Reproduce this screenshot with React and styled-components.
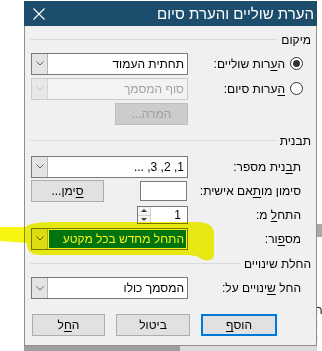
import React from 'react';
import styled, { createGlobalStyle } from 'styled-components';

const GlobalStyle = createGlobalStyle`
	html, body {
		margin: 0;
		padding: 0;
		background: #ffffff;
	}
	body {
		font-family: "Liberation Sans", Arial, "DejaVu Sans", sans-serif;
		font-size: 12px;
		color: #000000;
	}
`;

const Chevron = ({ color = '#606060' }) => (
	<svg width="8" height="5" viewBox="0 0 8 5">
		<path d="M0.5 0.5L4 4L7.5 0.5" fill="none" stroke={color} strokeWidth="1" />
	</svg>
);

const CloseIcon = () => (
	<svg width="12" height="12" viewBox="0 0 12 12">
		<path d="M0.5 0.5L11.5 11.5M11.5 0.5L0.5 11.5" stroke="#ffffff" strokeWidth="1.1" />
	</svg>
);

const Combo = ({ value, disabled, selected }) => (
	<ComboBox $disabled={disabled}>
		<ComboField $disabled={disabled} $selected={selected}>
			<span>{value}</span>
		</ComboField>
		<DropButton $disabled={disabled}>
			<Chevron color={disabled ? '#c4c4c4' : '#606060'} />
		</DropButton>
	</ComboBox>
);

const Section = ({ title, top }) => (
	<SectionHeader $top={top}>
		<span>{title}</span>
		<SectionLine />
	</SectionHeader>
);

const App = () => (
	<>
		<GlobalStyle />
		<Page>
			<Main>
				<Gutter />
				<Dialog dir="rtl">
					<TitleBar>
						<Title>הערת שוליים והערת סיום</Title>
						<Close>
							<CloseIcon />
						</Close>
					</TitleBar>
					<Body>
						<Section title="מיקום" />
						<Row $h={25} $top={4}>
							<Label $radio>
								<Radio $checked />
								<span>
									ה<K>ע</K>רות שוליים:
								</span>
							</Label>
							<Combo value="תחתית העמוד" />
						</Row>
						<Row $h={25}>
							<Label $radio>
								<Radio />
								<span>
									<K>ה</K>ערות סיום:
								</span>
							</Label>
							<Combo value="סוף המסמך" disabled />
						</Row>
						<Row $h={22} $top={2}>
							<span />
							<Controls>
								<Button $disabled>המרה...</Button>
							</Controls>
						</Row>

						<Section title="תבנית" top={8} />
						<Row $h={25} $top={6}>
							<Label>
								<span>
									ת<K>ב</K>נית מספר:
								</span>
							</Label>
							<Combo value="1, 2, 3, ..." />
						</Row>
						<Row $h={24}>
							<Label>
								<span>
									סימון מו<K>ת</K>אם אישית:
								</span>
							</Label>
							<Controls>
								<TextBox />
								<Button>
									<K>ס</K>ימן...
								</Button>
							</Controls>
						</Row>
						<Row $h={24}>
							<Label>
								<span>
									התח<K>ל</K> מ:
								</span>
							</Label>
							<Controls>
								<Spinner>
									<SpinValue>1</SpinValue>
									<SpinArrows>
										<SpinHalf>
											<Arrow $up />
										</SpinHalf>
										<SpinHalf>
											<Arrow />
										</SpinHalf>
									</SpinArrows>
								</Spinner>
							</Controls>
						</Row>
						<Row $h={23}>
							<Label>
								<span>
									מס<K>פ</K>ור:
								</span>
							</Label>
							<Combo value="התחל מחדש בכל מקטע" selected />
						</Row>

						<Section title="החלת שינויים" top={6} />
						<Row $h={24} $top={5}>
							<Label>
								<span>
									החל <K>ש</K>ינויים על:
								</span>
							</Label>
							<Combo value="המסמך כולו" />
						</Row>

						<Footer>
							<Button $default $w={76}>
								הוס<K>ף</K>
							</Button>
							<Button $w={74}>ביטול</Button>
							<Button $w={73}>
								ה<K>ח</K>ל
							</Button>
						</Footer>
					</Body>
				</Dialog>
				<RightStrip>
					<ScrollThumb />
					<Fragments>
						<span>ה</span>
						<span>ו</span>
						<span>ו</span>
					</Fragments>
				</RightStrip>
			</Main>
			<BottomBar>
				<Gutter />
				<BarDark />
				<BarLight />
			</BottomBar>
			<Marker viewBox="0 0 322 351" width="322" height="351">
				<path
					d="M0 227 L26 227 C28 224 36 222 56 222 L196 222 C208 222 214 226 214 234 L214 255 C214 261 205 262 200 258 C196 255 190 255 180 255 L40 255 C30 255 27 250 27 243 L0 241 Z"
					fill="#f6f612"
				/>
			</Marker>
		</Page>
	</>
);

const Page = styled.div`
	position: relative;
	width: 322px;
	height: 351px;
	overflow: hidden;
	display: flex;
	flex-direction: column;
`;

const Main = styled.div`
	display: flex;
	padding-top: 1px;
`;

const Gutter = styled.div`
	width: 24px;
	flex-shrink: 0;
`;

const Dialog = styled.div`
	width: 293px;
	height: 345px;
	flex-shrink: 0;
	box-sizing: border-box;
	background: #f0f0f0;
	border: 1px solid #8f8f8f;
	border-top: none;
	display: flex;
	flex-direction: column;
`;

const TitleBar = styled.div`
	height: 25px;
	margin: 0 -1px;
	background: #1c4d6c;
	display: flex;
	align-items: center;
	justify-content: space-between;
	padding: 0 3px 0 9px;
`;

const Title = styled.div`
	color: #ffffff;
	font-size: 15px;
`;

const Close = styled.div`
	display: flex;
	align-items: center;
`;

const Body = styled.div`
	padding: 6px 5px 0 6px;
	display: flex;
	flex-direction: column;
`;

const SectionHeader = styled.div`
	display: flex;
	align-items: center;
	gap: 4px;
	height: 15px;
	margin-top: ${props => props.$top || 0}px;
	margin-left: -1px;
`;

const SectionLine = styled.div`
	flex: 1;
	height: 1px;
	background: #dadada;
`;

const Row = styled.div`
	display: grid;
	grid-template-columns: 1fr 157px;
	align-items: center;
	height: ${props => props.$h}px;
	margin-top: ${props => props.$top || 0}px;
`;

const Label = styled.div`
	display: flex;
	align-items: center;
	gap: 5px;
	padding-right: ${props => (props.$radio ? 8 : 10)}px;
	white-space: nowrap;
`;

const K = styled.span`
	text-decoration: underline;
	text-underline-offset: 2px;
`;

const Radio = styled.span`
	position: relative;
	width: 13px;
	height: 13px;
	box-sizing: border-box;
	border: 1px solid #333333;
	border-radius: 50%;
	background: #ffffff;
	flex-shrink: 0;
	&::after {
		content: '';
		display: ${props => (props.$checked ? 'block' : 'none')};
		position: absolute;
		left: 2px;
		top: 2px;
		width: 7px;
		height: 7px;
		border-radius: 50%;
		background: #333333;
	}
`;

const ComboBox = styled.div`
	display: flex;
	height: 22px;
	box-sizing: border-box;
	border: 1px solid ${props => (props.$disabled ? '#cccccc' : '#7a7a7a')};
	background: ${props => (props.$disabled ? '#f3f3f3' : '#ffffff')};
`;

const ComboField = styled.div`
	flex: 1;
	display: flex;
	align-items: center;
	padding: ${props => (props.$selected ? '1px' : '0 3px 0 0')};
	color: ${props => (props.$disabled ? '#a3a3a3' : '#000000')};
	span {
		flex: 1;
		height: 100%;
		display: flex;
		align-items: center;
		padding-right: ${props => (props.$selected ? 2 : 0)}px;
		background: ${props => (props.$selected ? '#0078d7' : 'transparent')};
		color: ${props => (props.$selected ? '#ffffff' : 'inherit')};
	}
`;

const DropButton = styled.div`
	width: 15px;
	display: flex;
	align-items: center;
	justify-content: center;
	background: ${props => (props.$disabled ? '#e8e8e8' : '#e4e4e4')};
	border-right: 1px solid ${props => (props.$disabled ? '#d6d6d6' : '#b4b4b4')};
`;

const Controls = styled.div`
	display: flex;
	align-items: center;
	justify-content: space-between;
`;

const Button = styled.div`
	width: ${props => props.$w || 73}px;
	height: 22px;
	box-sizing: border-box;
	display: flex;
	align-items: center;
	justify-content: center;
	background: ${props => (props.$disabled ? '#cccccc' : '#e1e1e1')};
	border: ${props =>
		props.$default ? '2px solid #0078d7' : `1px solid ${props.$disabled ? '#bfbfbf' : '#adadad'}`};
	color: ${props => (props.$disabled ? '#9f9f9f' : '#000000')};
`;

const TextBox = styled.div`
	width: 47px;
	height: 20px;
	box-sizing: border-box;
	margin-right: 1px;
	border: 1px solid #7a7a7a;
	background: #ffffff;
`;

const Spinner = styled.div`
	width: 51px;
	height: 18px;
	box-sizing: border-box;
	display: flex;
	border: 1px solid #7a7a7a;
	background: #ffffff;
`;

const SpinValue = styled.div`
	flex: 1;
	display: flex;
	align-items: center;
	padding-right: 6px;
`;

const SpinArrows = styled.div`
	width: 12px;
	display: flex;
	flex-direction: column;
	border-right: 1px solid #cfcfcf;
`;

const SpinHalf = styled.div`
	flex: 1;
	display: flex;
	align-items: center;
	justify-content: center;
	background: #f4f4f4;
	& + & {
		border-top: 1px solid #cfcfcf;
	}
`;

const Arrow = styled.span`
	width: 0;
	height: 0;
	border-left: 3px solid transparent;
	border-right: 3px solid transparent;
	${props =>
		props.$up ? 'border-bottom: 3px solid #404040;' : 'border-top: 3px solid #404040;'}
`;

const Footer = styled.div`
	display: flex;
	gap: 11px;
	margin-top: 14px;
	padding-right: 34px;
`;

const RightStrip = styled.div`
	flex: 1;
	min-width: 0;
	overflow: hidden;
	display: flex;
	flex-direction: column;
	align-items: flex-start;
`;

const ScrollThumb = styled.div`
	width: 6px;
	height: 13px;
	margin-top: 223px;
	background: #a8a8a8;
`;

const Fragments = styled.div`
	margin-top: 66px;
	display: flex;
	flex-direction: column;
	font-size: 12px;
	line-height: 14px;
	color: #202020;
	span {
		margin-left: -2px;
	}
`;

const BottomBar = styled.div`
	display: flex;
	flex: 1;
`;

const BarDark = styled.div`
	width: 156px;
	background: #9e9e9e;
`;

const BarLight = styled.div`
	width: 137px;
	background: #dcdcdc;
`;

const Marker = styled.svg`
	position: absolute;
	left: 0;
	top: 0;
	pointer-events: none;
	mix-blend-mode: multiply;
`;

export default App;
